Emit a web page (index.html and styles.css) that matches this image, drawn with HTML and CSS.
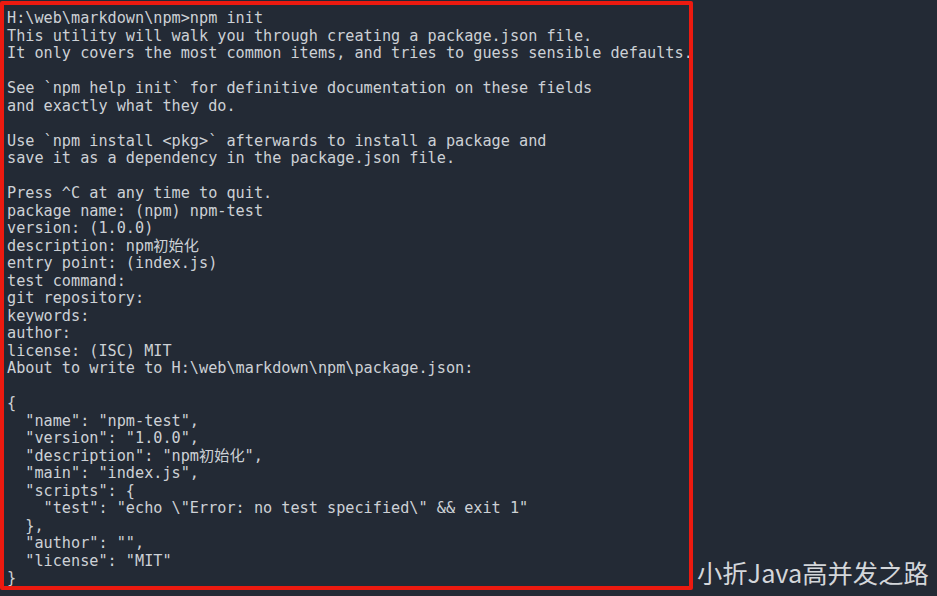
FILE: index.html
```html
<!DOCTYPE html>
<html lang="zh">
<head>
<meta charset="utf-8">
<title>npm init</title>
<link rel="stylesheet" href="styles.css">
</head>
<body>
<div class="page">
<pre class="terminal">H:\web\markdown\npm&gt;npm init
This utility will walk you through creating a package.json file.
It only covers the most common items, and tries to guess sensible defaults.

See `npm help init` for definitive documentation on these fields
and exactly what they do.

Use `npm install &lt;pkg&gt;` afterwards to install a package and
save it as a dependency in the package.json file.

Press ^C at any time to quit.
package name: (npm) npm-test
version: (1.0.0)
description: npm初始化
entry point: (index.js)
test command:
git repository:
keywords:
author:
license: (ISC) MIT
About to write to H:\web\markdown\npm\package.json:

{
  "name": "npm-test",
  "version": "1.0.0",
  "description": "npm初始化",
  "main": "index.js",
  "scripts": {
    "test": "echo \"Error: no test specified\" &amp;&amp; exit 1"
  },
  "author": "",
  "license": "MIT"
}</pre>
<div class="watermark">小折Java高并发之路</div>
</div>
</body>
</html>
```
FILE: styles.css
```css
html, body {
  margin: 0;
  padding: 0;
  background: #232a35;
  width: 937px;
  height: 596px;
  overflow: hidden;
}
.page {
  display: flex;
  align-items: flex-end;
  padding-top: 1px;
}
.terminal {
  margin: 0;
  box-sizing: border-box;
  width: 693px;
  height: 589px;
  border: 4px solid #ec1a10;
  border-radius: 2px;
  padding: 5px 2px 0 3px;
  font-family: "DejaVu Sans Mono", "Noto Sans CJK SC", monospace;
  font-size: 15.2px;
  line-height: 17.5px;
  color: #cdd1d6;
  white-space: pre;
  overflow: hidden;
}
.watermark {
  margin-left: 4px;
  margin-bottom: 3px;
  font-family: "Noto Sans CJK SC", "Noto Sans", sans-serif;
  font-size: 25.3px;
  line-height: 30px;
  color: #d3d6da;
  white-space: nowrap;
}
```
